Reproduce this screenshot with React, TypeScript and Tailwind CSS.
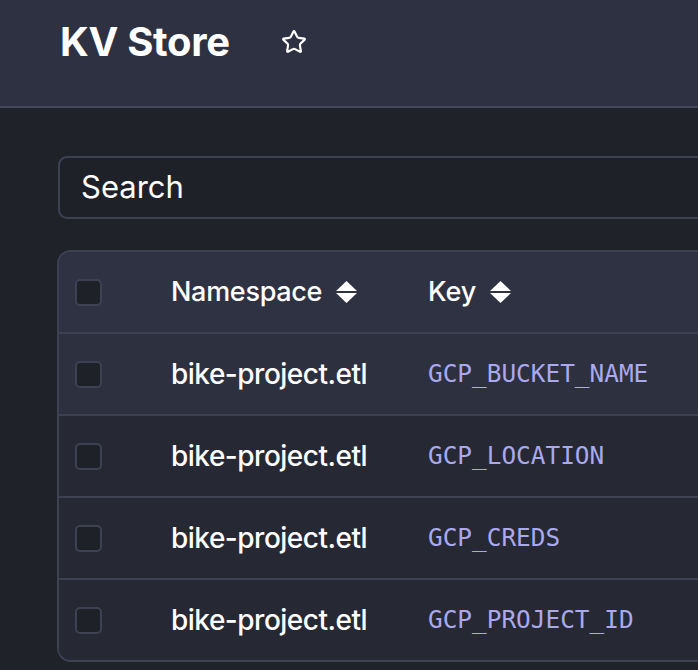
import { Star } from 'lucide-react'

const rows = [
  { ns: 'bike-project.etl', key: 'GCP_BUCKET_NAME' },
  { ns: 'bike-project.etl', key: 'GCP_LOCATION' },
  { ns: 'bike-project.etl', key: 'GCP_CREDS' },
  { ns: 'bike-project.etl', key: 'GCP_PROJECT_ID' },
]

function SortIcon() {
  return (
    <svg width="21" height="22" viewBox="0 0 21 22" className="ml-[14px]">
      <path d="M10.5 0 L21 10 L0 10 Z" fill="white" />
      <path d="M0 12 L21 12 L10.5 22 Z" fill="white" />
    </svg>
  )
}

function Checkbox() {
  return <div className="w-[27px] h-[27px] rounded-[5px] bg-[#1f2129] border-2 border-[#3e4152]" />
}

export default function App() {
  return (
    <div
      className="w-[698px] h-[670px] overflow-hidden bg-[#20222a] text-white"
      style={{ fontFamily: 'Inter, "Noto Sans", sans-serif' }}
    >
      {/* Header */}
      <div className="h-[108px] bg-[#2e3141] border-b-2 border-[#45485b] flex items-center pl-[60px] pb-[22px]">
        <h1 className="text-[40px] font-bold tracking-[-0.3px]">KV Store</h1>
        <Star className="ml-[51px] w-[26px] h-[26px]" strokeWidth={2} />
      </div>

      <div className="pl-[58px] pt-[48px] w-[1100px]">
        {/* Search */}
        <div className="h-[63px] rounded-[9px] border-2 border-[#3e4152] bg-[#1f2129] flex items-center pl-[21px]">
          <span className="text-[31px]">Search</span>
        </div>

        {/* Table */}
        <div className="mt-[31px] -ml-[1px] rounded-[14px] border-2 border-[#3e4152] overflow-hidden">
          <div className="h-[80px] bg-[#2f3242] flex items-center">
            <div className="w-[112px] pl-[16px]">
              <Checkbox />
            </div>
            <div className="w-[257px] flex items-center text-[27px] font-medium tracking-[-0.3px]">
              Namespace
              <SortIcon />
            </div>
            <div className="flex items-center text-[27px] font-medium">
              Key
              <SortIcon />
            </div>
          </div>
          {rows.map((r, i) => (
            <div
              key={r.key}
              className={
                'h-[82px] border-t-2 border-[#3e4152] flex items-center ' +
                (i === 0 ? 'bg-[#2d303e]' : 'bg-[#262833]')
              }
            >
              <div className="w-[112px] pl-[16px]">
                <Checkbox />
              </div>
              <div className="w-[257px] text-[28px] font-medium tracking-[-0.5px]">{r.ns}</div>
              <div
                className="text-[24.4px] text-[#aaa8ee]"
                style={{ fontFamily: '"DejaVu Sans Mono", monospace' }}
              >
                {r.key}
              </div>
            </div>
          ))}
        </div>
      </div>
    </div>
  )
}
